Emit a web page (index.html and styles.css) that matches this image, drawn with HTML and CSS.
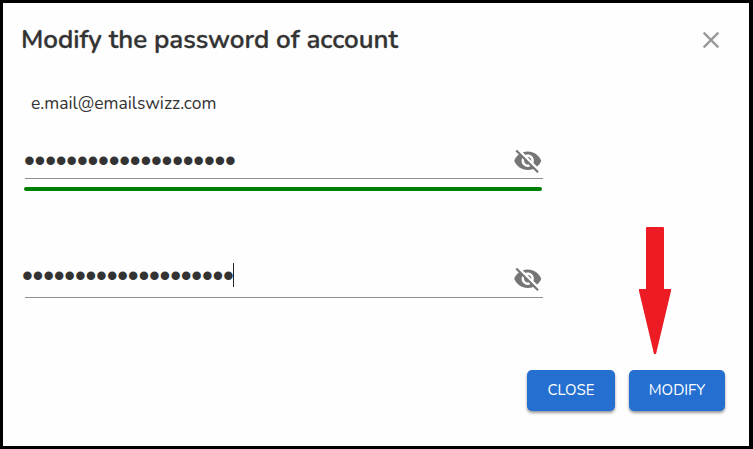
FILE: index.html
```html
<!DOCTYPE html>
<html lang="en">
<head>
<meta charset="utf-8">
<title>Modify the password of account</title>
<link rel="stylesheet" href="styles.css">
</head>
<body>
<main class="dialog">
  <header class="header">
    <h1 class="title">Modify the password of account</h1>
    <svg class="close-icon" viewBox="0 0 24 24"><path d="M19 6.41L17.59 5 12 10.59 6.41 5 5 6.41 10.59 12 5 17.59 6.41 19 12 13.41 17.59 19 19 17.59 13.41 12z"/></svg>
  </header>
  <p class="email">e.mail@emailswizz.com</p>
  <div class="field">
    <span class="dots">••••••••••••••••••••</span>
    <svg class="eye" viewBox="0 0 24 24"><path d="M12 7c2.76 0 5 2.24 5 5 0 .65-.13 1.26-.36 1.83l2.92 2.92c1.51-1.26 2.7-2.89 3.43-4.75-1.73-4.39-6-7.5-11-7.5-1.4 0-2.74.25-3.98.7l2.16 2.16C10.74 7.13 11.35 7 12 7zM2 4.27l2.28 2.28.46.46C3.08 8.3 1.78 10.02 1 12c1.73 4.39 6 7.5 11 7.5 1.55 0 3.03-.3 4.38-.84l.42.42L19.73 22 21 20.73 3.27 3 2 4.27zM7.53 9.8l1.55 1.55c-.05.21-.08.43-.08.65 0 1.66 1.34 3 3 3 .22 0 .44-.03.65-.08l1.55 1.55c-.67.33-1.41.53-2.2.53-2.76 0-5-2.24-5-5 0-.79.2-1.53.53-2.2zm4.31-.78l3.15 3.15.02-.16c0-1.66-1.34-3-3-3l-.17.01z"/></svg>
  </div>
  <div class="strength"></div>
  <div class="field field-confirm">
    <span class="dots">••••••••••••••••••••</span><span class="caret"></span>
    <svg class="eye" viewBox="0 0 24 24"><path d="M12 7c2.76 0 5 2.24 5 5 0 .65-.13 1.26-.36 1.83l2.92 2.92c1.51-1.26 2.7-2.89 3.43-4.75-1.73-4.39-6-7.5-11-7.5-1.4 0-2.74.25-3.98.7l2.16 2.16C10.74 7.13 11.35 7 12 7zM2 4.27l2.28 2.28.46.46C3.08 8.3 1.78 10.02 1 12c1.73 4.39 6 7.5 11 7.5 1.55 0 3.03-.3 4.38-.84l.42.42L19.73 22 21 20.73 3.27 3 2 4.27zM7.53 9.8l1.55 1.55c-.05.21-.08.43-.08.65 0 1.66 1.34 3 3 3 .22 0 .44-.03.65-.08l1.55 1.55c-.67.33-1.41.53-2.2.53-2.76 0-5-2.24-5-5 0-.79.2-1.53.53-2.2zm4.31-.78l3.15 3.15.02-.16c0-1.66-1.34-3-3-3l-.17.01z"/></svg>
  </div>
  <footer class="actions">
    <button class="button button-close">CLOSE</button>
    <button class="button button-modify">MODIFY</button>
  </footer>
  <svg class="arrow" viewBox="0 0 32 128"><path d="M7.5 0h17l.5 1v61h7v2L17 127h-2L0 64v-2h7V1z"/></svg>
</main>
</body>
</html>
```
FILE: styles.css
```css
* { box-sizing: border-box; }
body {
  margin: 0;
  font-family: Nunito, "Noto Sans", sans-serif;
  color: #333;
}
.dialog {
  position: relative;
  display: flex;
  flex-direction: column;
  width: 753px;
  height: 449px;
  border: 3px solid #000;
  border-right-width: 4px;
  background: #fefefe;
}
.header {
  display: flex;
  justify-content: space-between;
  align-items: center;
  height: 74px;
  padding: 0 24px 0 18px;
}
.title {
  margin: 0;
  font-size: 26px;
  font-weight: 600;
  line-height: 32px;
  letter-spacing: -0.04px;
  -webkit-text-stroke: 0.35px #333;
  white-space: nowrap;
}
.close-icon { width: 28px; height: 28px; fill: #999; }
.email {
  margin: 14px 0 0 28px;
  font-size: 17.5px;
  line-height: 24px;
}
.field {
  display: flex;
  align-items: center;
  width: 518px;
  height: 36px;
  margin: 28px 0 0 22px;
  border-bottom: 1px solid #8f8f8f;
}
.dots {
  margin-left: -1px;
  font: 31px/36px "Liberation Sans", sans-serif;
  letter-spacing: -0.27px;
  white-space: nowrap;
}
.eye {
  width: 29.5px;
  height: 29.5px;
  margin: 0 1px 0 auto;
  fill: #757575;
}
.strength {
  width: 518px;
  height: 4px;
  margin: 8px 0 0 21px;
  border-radius: 2px;
  background: #008000;
}
.field-confirm { height: 37px; margin-top: 70px; }
.field-confirm .dots { margin: -7px 0 0 -3px; }
.field-confirm .eye { margin-top: 0; }
.caret { width: 1px; height: 24px; margin: -8px 0 0 -1px; background: #222; }
.actions {
  display: flex;
  justify-content: flex-end;
  gap: 14px;
  margin: 72px 24px 0 0;
}
.button {
  height: 41px;
  padding: 0 0 1px;
  border: 0;
  border-radius: 5px;
  background: #256fd1;
  color: #fff;
  font: 15px/38px Nunito, "Noto Sans", sans-serif;
  box-shadow: 0 2px 3px rgba(0, 0, 0, .4);
}
.button-close { width: 88px; }
.button-modify { width: 96px; }
.arrow {
  position: absolute;
  left: 636px;
  top: 224px;
  width: 32px;
  height: 128px;
  fill: #ed1c24;
}
```
